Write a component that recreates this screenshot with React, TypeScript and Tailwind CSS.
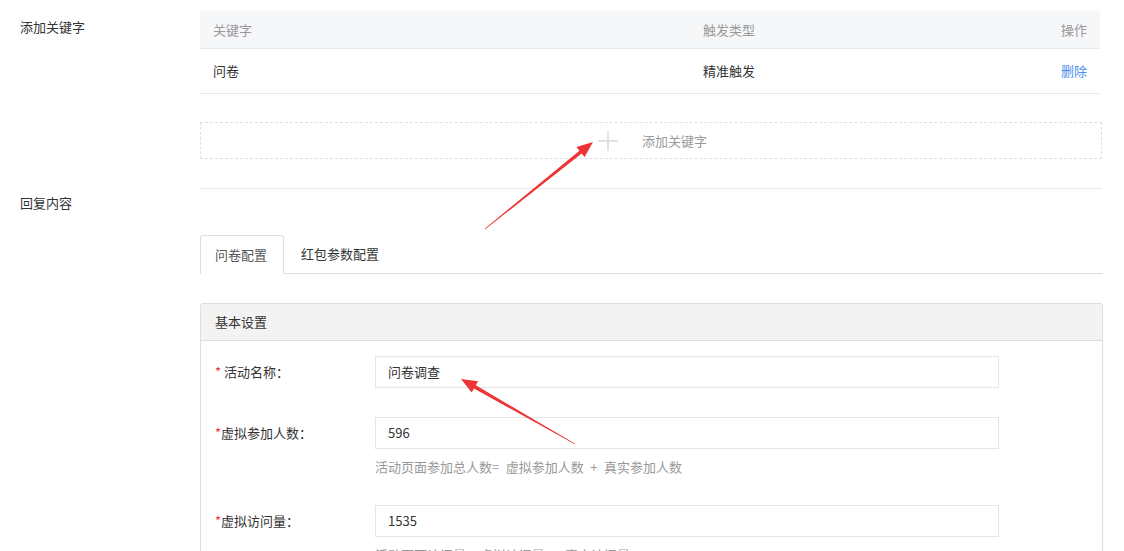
import React from "react";

function arrowPoly(tx: number, ty: number, hx: number, hy: number) {
  const dx = hx - tx;
  const dy = hy - ty;
  const len = Math.sqrt(dx * dx + dy * dy);
  const ux = dx / len;
  const uy = dy / len;
  const px = -uy;
  const py = ux;
  const headLen = 16;
  const headW = 6.5;
  const shaftW = 1.8;
  const bx = hx - ux * headLen;
  const by = hy - uy * headLen;
  const pts: [number, number][] = [
    [tx + px * 0.4, ty + py * 0.4],
    [bx + px * shaftW, by + py * shaftW],
    [bx + px * headW, by + py * headW],
    [hx, hy],
    [bx - px * headW, by - py * headW],
    [bx - px * shaftW, by - py * shaftW],
    [tx - px * 0.4, ty - py * 0.4],
  ];
  return pts.map((p) => p.join(",")).join(" ");
}

function Field({
  label,
  spaced,
  value,
  help,
  className,
}: {
  label: string;
  spaced?: boolean;
  value: string;
  help?: string;
  className?: string;
}) {
  return (
    <div className={"flex flex-col " + (className ?? "")}>
      <div className="flex items-center">
        <div className="w-[160px] text-[13px] text-[#333]">
          <span className="text-[#e4393c]">*</span>
          {spaced ? " " : ""}
          {label}
        </div>
        <div className="w-[624px] h-[32px] border border-[#e6e6e6] flex items-center pl-[12px] text-[13px] text-[#333]">
          {value}
        </div>
      </div>
      {help ? (
        <div className="pl-[160px] mt-[8px] text-[13px] leading-[20px] text-[#999]">{help}</div>
      ) : null}
    </div>
  );
}

export default function App() {
  return (
    <div
      className="relative w-[1124px] h-[551px] overflow-hidden bg-white text-[13px] text-[#333]"
      style={{ fontFamily: '"Noto Sans CJK SC", "Noto Sans", sans-serif' }}
    >
      {/* Section 1 */}
      <div className="flex pt-[11px]">
        <div className="w-[200px] pl-[20px] pt-[6px] leading-[20px]">添加关键字</div>
        <div className="w-[902px] flex flex-col">
          <div className="w-[900px]">
            <div className="flex h-[38px] items-center bg-[#f6f7f9] border-b border-[#e8e8e8] text-[#999]">
              <div className="w-[503px] pl-[13px]">关键字</div>
              <div className="flex-1">触发类型</div>
              <div className="pr-[13px]">操作</div>
            </div>
            <div className="flex h-[45px] items-center border-b border-[#e8e8e8] text-[#333]">
              <div className="w-[503px] pl-[13px]">问卷</div>
              <div className="flex-1">精准触发</div>
              <div className="pr-[13px] text-[#4a8ef0]">删除</div>
            </div>
          </div>
          <div className="mt-[28px] h-[37px] border border-dashed border-[#e0e0e0] flex items-center">
            <div className="ml-[397px] w-[20px] h-[20px] relative">
              <div className="absolute left-[9px] top-0 w-[2px] h-[20px] bg-[#e2e2e2]" />
              <div className="absolute left-0 top-[9px] w-[20px] h-[2px] bg-[#e2e2e2]" />
            </div>
            <div className="ml-[24px] text-[#999]">添加关键字</div>
          </div>
          <div className="mt-[29px] border-b border-[#e8e8e8]" />
        </div>
      </div>

      {/* Section 2 */}
      <div className="flex">
        <div className="w-[200px] pl-[20px] pt-[4px] leading-[20px]">回复内容</div>
        <div className="w-[903px] flex flex-col pt-[46px]">
          <div className="flex h-[39px] border-b border-[#dddddd]">
            <div className="w-[84px] h-[39px] -mb-px border border-[#dddddd] border-b-white bg-white rounded-t-[3px] flex items-center pl-[14px] text-[13px] text-[#555]">
              问卷配置
            </div>
            <div className="pl-[17px] flex items-center text-[13px] text-[#333]">红包参数配置</div>
          </div>
          <div className="mt-[29px] border border-[#dddddd] rounded-t-[3px]">
            <div className="h-[37px] bg-[#f3f3f3] border-b border-[#dddddd] flex items-center pl-[14px] text-[#333]">
              基本设置
            </div>
            <div className="pl-[14px] pt-[15px] flex flex-col pb-[20px]">
              <Field label="活动名称：" spaced value="问卷调查" />
              <Field
                className="mt-[29px]"
                label="虚拟参加人数："
                value="596"
                help={"活动页面参加总人数=\u2002虚拟参加人数\u2002+\u2002真实参加人数"}
              />
              <Field
                className="mt-[28px]"
                label="虚拟访问量："
                value="1535"
                help={"活动页面访问量=\u2002虚拟访问量\u2002+\u2002真实访问量"}
              />
            </div>
          </div>
        </div>
      </div>

      {/* Annotation arrows */}
      <svg className="absolute left-0 top-0 pointer-events-none" width="1124" height="551">
        <polygon points={arrowPoly(485, 229, 593, 142)} fill="#ee3535" />
        <polygon points={arrowPoly(575, 444, 461, 379)} fill="#ee3535" />
      </svg>
    </div>
  );
}
